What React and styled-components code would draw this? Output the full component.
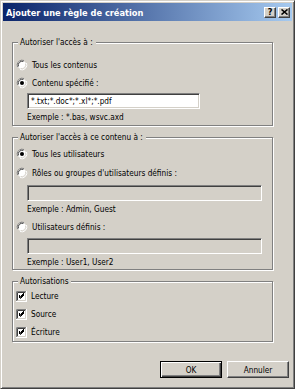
import React, { useState } from "react";
import styled, { createGlobalStyle } from "styled-components";

const GlobalStyle = createGlobalStyle`
  html, body {
    margin: 0;
    padding: 0;
    background: #d4d0c8;
  }
  body {
    font-family: "DejaVu Sans Condensed", "Liberation Sans", sans-serif;
    font-size: 8.2px;
    color: #000;
  }
`;

const Window = styled.div`
  width: 295px;
  height: 389px;
  box-sizing: border-box;
  background: #d4d0c8;
  border-top: 1px solid #d4d0c8;
  border-left: 1px solid #d4d0c8;
  border-right: 1px solid #404040;
  border-bottom: 1px solid #404040;
  box-shadow: inset 1px 1px 0 #fff, inset -1px -1px 0 #808080;
  padding: 2px;
  display: flex;
  flex-direction: column;
`;

const TitleBar = styled.div`
  height: 18px;
  display: flex;
  align-items: center;
  padding: 0 2px 0 2px;
  background: linear-gradient(to right, #0a246a, #a6caf0);
  color: #fff;
`;

const Title = styled.div`
  flex: 1;
  font-weight: bold;
  font-size: 9.2px;
  padding-left: 1px;
`;

const CaptionButton = styled.div`
  width: 12px;
  height: 11px;
  box-sizing: border-box;
  margin-left: ${(p) => (p.$gap ? "2px" : "0")};
  background: #d4d0c8;
  border-top: 1px solid #fff;
  border-left: 1px solid #fff;
  border-right: 1px solid #404040;
  border-bottom: 1px solid #404040;
  box-shadow: inset -1px -1px 0 #808080;
  display: flex;
  align-items: center;
  justify-content: center;
  color: #000;
  font-weight: bold;
  font-size: 9px;
  line-height: 1;
`;

const Content = styled.div`
  flex: 1;
  display: flex;
  flex-direction: column;
  padding: 21px 0 0 9px;
`;

const Group = styled.div`
  position: relative;
  width: 261px;
  box-sizing: border-box;
  border: 1px solid #808080;
  box-shadow: inset 1px 1px 0 #fff, 1px 1px 0 #fff;
  padding: ${(p) => p.$pad};
  margin-bottom: 11px;
  display: flex;
  flex-direction: column;
`;

const Legend = styled.div`
  position: absolute;
  left: 5px;
  top: -7px;
  padding: 0 3px 0 2px;
  background: #d4d0c8;
  line-height: 13px;
`;

const OptionRow = styled.label`
  height: ${(p) => p.$h || 18}px;
  margin-top: ${(p) => p.$mt || 0}px;
  display: flex;
  align-items: center;
  gap: 4px;
  padding-left: 3px;
`;

const Field = styled.div`
  margin: ${(p) => p.$mt}px 0 0 14px;
  width: ${(p) => p.$w}px;
  height: 16px;
  box-sizing: border-box;
  border-top: 1px solid #808080;
  border-left: 1px solid #808080;
  border-right: 1px solid #fff;
  border-bottom: 1px solid #fff;
  box-shadow: inset 1px 1px 0 #404040, inset -1px -1px 0 #d4d0c8;
  background: ${(p) => (p.$disabled ? "#d4d0c8" : "#fff")};
  padding: 0 3px;
  display: flex;
  align-items: center;
`;

const Hint = styled.div`
  height: 14px;
  margin: 1px 0 0 14px;
  display: flex;
  align-items: center;
`;

const ButtonRow = styled.div`
  display: flex;
  justify-content: flex-end;
  gap: 5px;
  padding-right: 3px;
  margin-top: 8px;
`;

const Button = styled.div`
  width: 62px;
  height: 17px;
  box-sizing: border-box;
  display: flex;
  align-items: center;
  justify-content: center;
  background: #d4d0c8;
  border: 1px solid ${(p) => (p.$default ? "#000" : "transparent")};
  box-shadow: ${(p) =>
    p.$default
      ? "inset 1px 1px 0 #fff, inset -1px -1px 0 #404040, inset -2px -2px 0 #808080"
      : "inset 1px 1px 0 #fff, inset -1px -1px 0 #808080"};
  ${(p) =>
    !p.$default &&
    `border-top-color: #fff; border-left-color: #fff; border-right-color: #404040; border-bottom-color: #404040; box-shadow: inset -1px -1px 0 #808080;`}
`;

const Radio = ({ checked }) => (
  <svg width="12" height="12" viewBox="0 0 12 12">
    <path d="M1.5 8 A5 5 0 0 1 8 1.5" fill="none" stroke="#808080" strokeWidth="1" />
    <circle cx="6" cy="6" r="4.3" fill="#fff" />
    <path d="M2.4 7.4 A4 4 0 0 1 7.4 2.4" fill="none" stroke="#404040" strokeWidth="1" />
    <path d="M10.5 4 A5 5 0 0 1 4 10.5" fill="none" stroke="#fff" strokeWidth="1" />
    <path d="M9.6 4.6 A4 4 0 0 1 4.6 9.6" fill="none" stroke="#d4d0c8" strokeWidth="1" />
    {checked && <circle cx="6" cy="6" r="2" fill="#000" />}
  </svg>
);

const Check = ({ checked }) => (
  <svg width="11" height="11" viewBox="0 0 11 11">
    <rect x="0" y="0" width="11" height="11" fill="#fff" />
    <path d="M0.5 10.5 V0.5 H10.5" fill="none" stroke="#808080" />
    <path d="M1.5 9.5 V1.5 H9.5" fill="none" stroke="#404040" />
    <path d="M10.5 0 V10.5 H0" fill="none" stroke="#fff" />
    <path d="M9.5 1.5 V9.5 H1.5" fill="none" stroke="#d4d0c8" />
    {checked && (
      <path d="M3 5 L4.5 6.5 L8 3 M3 6 L4.5 7.5 L8 4 M3 4 L4.5 5.5 L8 2" fill="none" stroke="#000" strokeWidth="1" />
    )}
  </svg>
);

const App = () => {
  const [content] = useState("specific");
  const [users] = useState("all");

  return (
    <>
      <GlobalStyle />
      <Window>
        <TitleBar>
          <Title>Ajouter une règle de création</Title>
          <CaptionButton>?</CaptionButton>
          <CaptionButton $gap>
            <svg width="7" height="6" viewBox="0 0 7 6">
              <path d="M0.5 0.5 L6.5 5.5 M6.5 0.5 L0.5 5.5" stroke="#000" strokeWidth="1.6" />
            </svg>
          </CaptionButton>
        </TitleBar>
        <Content>
          <Group $pad="13px 0 1px 0">
            <Legend>Autoriser l'accès à :</Legend>
            <OptionRow>
              <Radio checked={content === "all"} />
              Tous les contenus
            </OptionRow>
            <OptionRow>
              <Radio checked={content === "specific"} />
              Contenu spécifié :
            </OptionRow>
            <Field $mt={1} $w={173}>*.txt;*.doc*;*.xl*;*.pdf</Field>
            <Hint>Exemple : *.bas, wsvc.axd</Hint>
          </Group>

          <Group $pad="7px 0 0 0">
            <Legend>Autoriser l'accès à ce contenu à :</Legend>
            <OptionRow>
              <Radio checked={users === "all"} />
              Tous les utilisateurs
            </OptionRow>
            <OptionRow $mt={1}>
              <Radio checked={users === "roles"} />
              Rôles ou groupes d'utilisateurs définis :
            </OptionRow>
            <Field $mt={3} $w={235} $disabled />
            <Hint>Exemple : Admin, Guest</Hint>
            <OptionRow $mt={2}>
              <Radio checked={users === "users"} />
              Utilisateurs définis :
            </OptionRow>
            <Field $mt={2} $w={235} $disabled />
            <Hint>Exemple : User1, User2</Hint>
          </Group>

          <Group $pad="6px 0 1px 0">
            <Legend>Autorisations</Legend>
            <OptionRow $h={16}>
              <Check checked />
              Lecture
            </OptionRow>
            <OptionRow $h={16} $mt={2}>
              <Check checked />
              Source
            </OptionRow>
            <OptionRow $h={16} $mt={2}>
              <Check checked />
              Écriture
            </OptionRow>
          </Group>

          <ButtonRow>
            <Button $default>OK</Button>
            <Button>Annuler</Button>
          </ButtonRow>
        </Content>
      </Window>
    </>
  );
};

export default App;
